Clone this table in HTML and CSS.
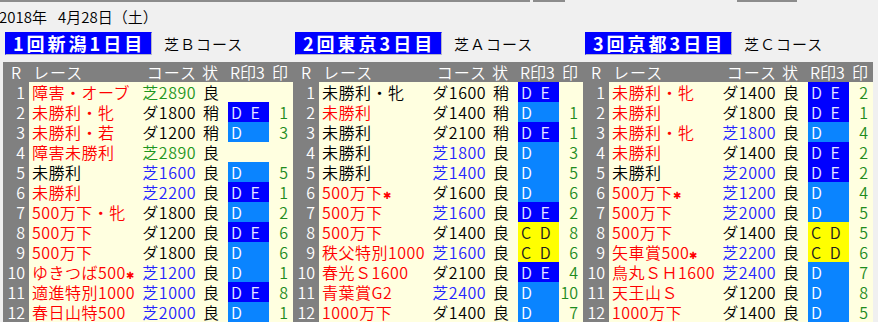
FILE: index.html
```html
<!DOCTYPE html>
<html lang="ja">
<head>
<meta charset="utf-8">
<title>2018年4月28日</title>
<link rel="stylesheet" href="styles.css">
</head>
<body>
<div class="top"><span class="seg s1"></span><span class="seg s2"></span><span class="seg s3"></span></div>
<div class="date">2018年<span class="gap"></span>4月28日（土）</div>
<div class="sections">
  <section class="sec">
    <div class="head"><div class="kai">1回新潟1日目</div><div class="course">芝Ｂコース</div></div>
    <div class="tbl">
      <div class="th c-r">R</div><div class="th c-nm">レース</div><div class="th c-cs">コース</div><div class="th c-st">状</div><div class="th c-mk">R印3</div><div class="th c-in">印</div>
      <div class="n">1</div><div class="nm red">障害・オーブ</div><div class="cs sg">芝2890</div><div class="st">良</div><div class="mk"></div><div class="in"></div>
      <div class="n">2</div><div class="nm red">未勝利・牝</div><div class="cs">ダ1800</div><div class="st">稍</div><div class="mk de">D E</div><div class="in">1</div>
      <div class="n">3</div><div class="nm red">未勝利・若</div><div class="cs">ダ1200</div><div class="st">稍</div><div class="mk d">D</div><div class="in">3</div>
      <div class="n">4</div><div class="nm red">障害未勝利</div><div class="cs sg">芝2890</div><div class="st">良</div><div class="mk"></div><div class="in"></div>
      <div class="n">5</div><div class="nm">未勝利</div><div class="cs sb">芝1600</div><div class="st">良</div><div class="mk d">D</div><div class="in">5</div>
      <div class="n">6</div><div class="nm red">未勝利</div><div class="cs sb">芝2200</div><div class="st">良</div><div class="mk de">D E</div><div class="in">1</div>
      <div class="n">7</div><div class="nm red">500万下・牝</div><div class="cs">ダ1800</div><div class="st">良</div><div class="mk d">D</div><div class="in">2</div>
      <div class="n">8</div><div class="nm red">500万下</div><div class="cs">ダ1200</div><div class="st">良</div><div class="mk de">D E</div><div class="in">6</div>
      <div class="n">9</div><div class="nm red">500万下</div><div class="cs">ダ1800</div><div class="st">良</div><div class="mk d">D</div><div class="in">6</div>
      <div class="n">10</div><div class="nm red">ゆきつば500<span class="ast">✱</span></div><div class="cs sb">芝1200</div><div class="st">良</div><div class="mk d">D</div><div class="in">1</div>
      <div class="n">11</div><div class="nm red">適進特別1000</div><div class="cs sb">芝1000</div><div class="st">良</div><div class="mk de">D E</div><div class="in">8</div>
      <div class="n">12</div><div class="nm red">春日山特500</div><div class="cs sb">芝2000</div><div class="st">良</div><div class="mk d">D</div><div class="in">1</div>
    </div>
  </section>
  <section class="sec">
    <div class="head"><div class="kai">2回東京3日目</div><div class="course">芝Ａコース</div></div>
    <div class="tbl">
      <div class="th c-r">R</div><div class="th c-nm">レース</div><div class="th c-cs">コース</div><div class="th c-st">状</div><div class="th c-mk">R印3</div><div class="th c-in">印</div>
      <div class="n">1</div><div class="nm">未勝利・牝</div><div class="cs">ダ1600</div><div class="st">稍</div><div class="mk de">D E</div><div class="in"></div>
      <div class="n">2</div><div class="nm red">未勝利</div><div class="cs">ダ1400</div><div class="st">稍</div><div class="mk d">D</div><div class="in">1</div>
      <div class="n">3</div><div class="nm">未勝利</div><div class="cs">ダ2100</div><div class="st">稍</div><div class="mk de">D E</div><div class="in">1</div>
      <div class="n">4</div><div class="nm">未勝利</div><div class="cs sb">芝1800</div><div class="st">良</div><div class="mk d">D</div><div class="in">3</div>
      <div class="n">5</div><div class="nm">未勝利</div><div class="cs sb">芝1400</div><div class="st">良</div><div class="mk d">D</div><div class="in">5</div>
      <div class="n">6</div><div class="nm red">500万下<span class="ast">✱</span></div><div class="cs">ダ1600</div><div class="st">良</div><div class="mk d">D</div><div class="in">6</div>
      <div class="n">7</div><div class="nm red">500万下</div><div class="cs sb">芝1600</div><div class="st">良</div><div class="mk de">D E</div><div class="in">2</div>
      <div class="n">8</div><div class="nm red">500万下</div><div class="cs">ダ1400</div><div class="st">良</div><div class="mk cd">C D</div><div class="in">8</div>
      <div class="n">9</div><div class="nm red">秩父特別1000</div><div class="cs sb">芝1600</div><div class="st">良</div><div class="mk cd">C D</div><div class="in">6</div>
      <div class="n">10</div><div class="nm red">春光Ｓ1600</div><div class="cs">ダ2100</div><div class="st">良</div><div class="mk de">D E</div><div class="in">4</div>
      <div class="n">11</div><div class="nm red">青葉賞G2</div><div class="cs sb">芝2400</div><div class="st">良</div><div class="mk d">D</div><div class="in">10</div>
      <div class="n">12</div><div class="nm red">1000万下</div><div class="cs">ダ1400</div><div class="st">良</div><div class="mk d">D</div><div class="in">7</div>
    </div>
  </section>
  <section class="sec">
    <div class="head"><div class="kai">3回京都3日目</div><div class="course">芝Ｃコース</div></div>
    <div class="tbl">
      <div class="th c-r">R</div><div class="th c-nm">レース</div><div class="th c-cs">コース</div><div class="th c-st">状</div><div class="th c-mk">R印3</div><div class="th c-in">印</div>
      <div class="n">1</div><div class="nm red">未勝利・牝</div><div class="cs">ダ1400</div><div class="st">良</div><div class="mk de">D E</div><div class="in">2</div>
      <div class="n">2</div><div class="nm red">未勝利</div><div class="cs">ダ1800</div><div class="st">良</div><div class="mk de">D E</div><div class="in">1</div>
      <div class="n">3</div><div class="nm red">未勝利・牝</div><div class="cs sb">芝1800</div><div class="st">良</div><div class="mk d">D</div><div class="in">4</div>
      <div class="n">4</div><div class="nm red">未勝利</div><div class="cs">ダ1400</div><div class="st">良</div><div class="mk de">D E</div><div class="in">2</div>
      <div class="n">5</div><div class="nm">未勝利</div><div class="cs sb">芝2000</div><div class="st">良</div><div class="mk de">D E</div><div class="in">2</div>
      <div class="n">6</div><div class="nm red">500万下<span class="ast">✱</span></div><div class="cs sb">芝1200</div><div class="st">良</div><div class="mk d">D</div><div class="in">4</div>
      <div class="n">7</div><div class="nm red">500万下</div><div class="cs sb">芝2000</div><div class="st">良</div><div class="mk d">D</div><div class="in">5</div>
      <div class="n">8</div><div class="nm red">500万下</div><div class="cs">ダ1400</div><div class="st">良</div><div class="mk cd">C D</div><div class="in">5</div>
      <div class="n">9</div><div class="nm red">矢車賞500<span class="ast">✱</span></div><div class="cs sb">芝2200</div><div class="st">良</div><div class="mk cd">C D</div><div class="in">6</div>
      <div class="n">10</div><div class="nm red">鳥丸ＳＨ1600</div><div class="cs sb">芝2400</div><div class="st">良</div><div class="mk d">D</div><div class="in">7</div>
      <div class="n">11</div><div class="nm red">天王山Ｓ</div><div class="cs">ダ1200</div><div class="st">良</div><div class="mk d">D</div><div class="in">8</div>
      <div class="n">12</div><div class="nm red">1000万下</div><div class="cs">ダ1400</div><div class="st">良</div><div class="mk d">D</div><div class="in">5</div>
    </div>
  </section>
</div>
</body>
</html>
```

FILE: styles.css
```css
html, body {
  margin: 0;
  padding: 0;
  background: #f0f0f0;
  overflow: hidden;
}
body {
  width: 878px;
  height: 322px;
  font-family: "Noto Sans CJK JP", "Noto Sans", sans-serif;
  font-weight: 350;
  color: #000;
}
.top {
  display: flex;
  height: 2px;
}
.seg {
  display: block;
  height: 2px;
  background: #8c8c8c;
}
.s1 { width: 530px; }
.s2 { width: 32px; margin-left: 3px; }
.s3 { width: 60px; margin-left: 172px; }

.date {
  margin-top: 6px;
  margin-left: -1px;
  height: 18px;
  line-height: 18px;
  font-size: 15px;
  white-space: nowrap;
}
.gap {
  display: inline-block;
  width: 11px;
}

.sections {
  display: flex;
  margin-top: 6px;
  padding-left: 3px;
}
.sec {
  width: 290px;
  flex: none;
}
.head {
  display: flex;
  align-items: center;
  height: 23px;
  margin-left: 2px;
  margin-bottom: 7px;
}
.kai {
  box-sizing: border-box;
  width: 147px;
  height: 23px;
  padding-left: 7px;
  background: #0000ff;
  border: 1px solid #0000ff;
  border-right-color: #b4b4c8;
  border-bottom-color: #b4b4c8;
  color: #fff;
  font-weight: bold;
  font-size: 18px;
  letter-spacing: 3px;
  line-height: 21px;
  white-space: nowrap;
}
.course {
  margin-left: 12px;
  font-size: 15px;
  letter-spacing: 1px;
  line-height: 23px;
  white-space: nowrap;
}

.tbl {
  display: grid;
  grid-template-columns: 26px 111px 58px 30px 41px 24px;
  grid-auto-rows: 20px;
  background: #ffffe0;
  font-size: 16px;
  line-height: 20px;
  letter-spacing: 0.5px;
  white-space: nowrap;
}
.th {
  background: #808080;
  color: #fff;
}
.c-r { text-align: center; letter-spacing: 0; }
.c-nm { padding-left: 4px; letter-spacing: 1px; }
.c-cs { text-align: right; padding-right: 1px; letter-spacing: 1px; }
.c-st { padding-left: 4px; }
.c-mk { padding-left: 2px; letter-spacing: 0; }
.c-in { text-align: right; padding-right: 5px; letter-spacing: 0; }

.n {
  background: #808080;
  color: #fff;
  text-align: right;
  padding-right: 4px;
  letter-spacing: 0;
}
.nm {
  padding-left: 3px;
  color: #000;
}
.nm.red { color: #ff0000; }
.ast {
  font-family: "DejaVu Sans", sans-serif;
  font-size: 10px;
  letter-spacing: 0;
}
.cs {
  text-align: right;
  padding-right: 2px;
  color: #000;
}
.cs.sb { color: #2424ff; }
.cs.sg { color: #1e961e; }
.st {
  padding-left: 5px;
}
.mk {
  padding-left: 3px;
  word-spacing: 3px;
  letter-spacing: 1px;
}
.mk.de { background: #0000ff; color: #e8e8ff; }
.mk.d { background: #0a84ff; color: #fff; }
.mk.cd { background: #ffff00; color: #202020; }
.in {
  text-align: right;
  padding-right: 5px;
  color: #1e8c1e;
  letter-spacing: 0;
}
```
